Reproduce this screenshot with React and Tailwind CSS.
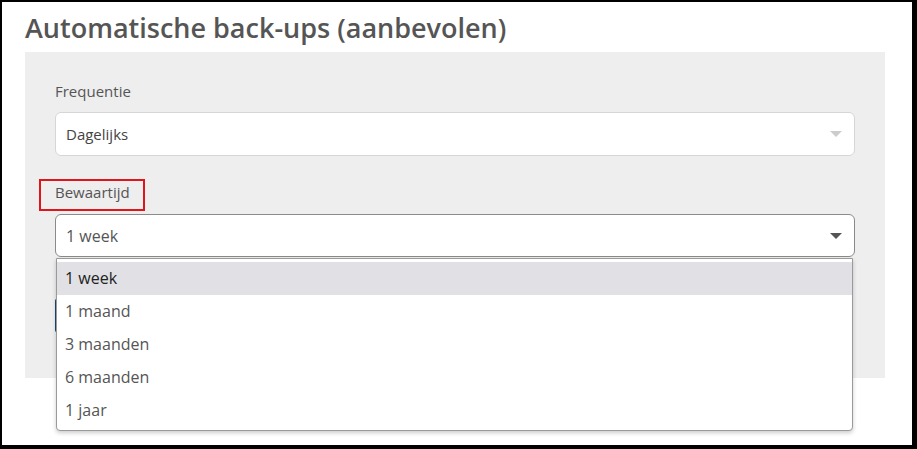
import React from "react";

const options = ["1 week", "1 maand", "3 maanden", "6 maanden", "1 jaar"];

const Caret = ({ color }) => (
  <svg width="12" height="6" viewBox="0 0 12 6" className="shrink-0">
    <path d="M0 0 L12 0 L6 6 Z" fill={color} />
  </svg>
);

export default function App() {
  return (
    <div
      className="w-[917px] h-[449px] bg-white border-t-2 border-l-2 border-r-[5px] border-b-[4px] border-black overflow-hidden"
      style={{ fontFamily: '"Open Sans", "Noto Sans", sans-serif' }}
    >
      <h1 className="ml-[23px] mt-[6px] text-[27px] leading-[40px] font-semibold text-[#555555]">
        Automatische back-ups (aanbevolen)
      </h1>

      <div className="ml-[23px] mt-[4px] w-[860px] h-[326px] bg-[#eeeeee] px-[30px] pt-[29px]">
        <p className="text-[15px] leading-[20px] text-[#555555]">Frequentie</p>
        <div className="mt-[11px] h-[44px] bg-white border border-[#d6d6d6] rounded-[6px] flex items-center justify-between pl-[10px] pr-[12px]">
          <span className="text-[15px] text-[#444444]">Dagelijks</span>
          <Caret color="#cccccc" />
        </div>

        <div className="mt-[26px] relative inline-block">
          <span className="absolute -left-[16px] -top-[3px] w-[106px] h-[32px] border-2 border-[#e0151b]" />
          <p className="text-[15px] leading-[20px] text-[#555555]">Bewaartijd</p>
        </div>

        <div className="relative mt-[10px]">
          <div className="h-[43px] bg-white border border-[#8a8a8a] rounded-[6px] flex items-center justify-between pl-[10px] pr-[12px]">
            <span className="text-[16px] text-[#555555]">1 week</span>
            <Caret color="#555555" />
          </div>

          <div className="mt-[41px] h-[35px] w-[100px] bg-[#1d5b8c] border border-[#154a73] rounded-[3px]" />

          <ul className="absolute left-[1px] top-[44px] w-[797px] bg-white border border-[#9a9a9a] rounded-b-[4px] shadow-[0_2px_4px_rgba(0,0,0,0.2)] pt-[3px] pb-[3px] z-10">
            {options.map((o, i) => (
              <li
                key={o}
                className={
                  i === 0
                    ? "h-[33px] flex items-center pl-[8px] pb-[1px] text-[16px] bg-[#e1e0e5] text-[#222222]"
                    : "h-[33px] flex items-center pl-[8px] pb-[2px] text-[16px] text-[#555555]"
                }
              >
                {o}
              </li>
            ))}
          </ul>
        </div>
      </div>
    </div>
  );
}
